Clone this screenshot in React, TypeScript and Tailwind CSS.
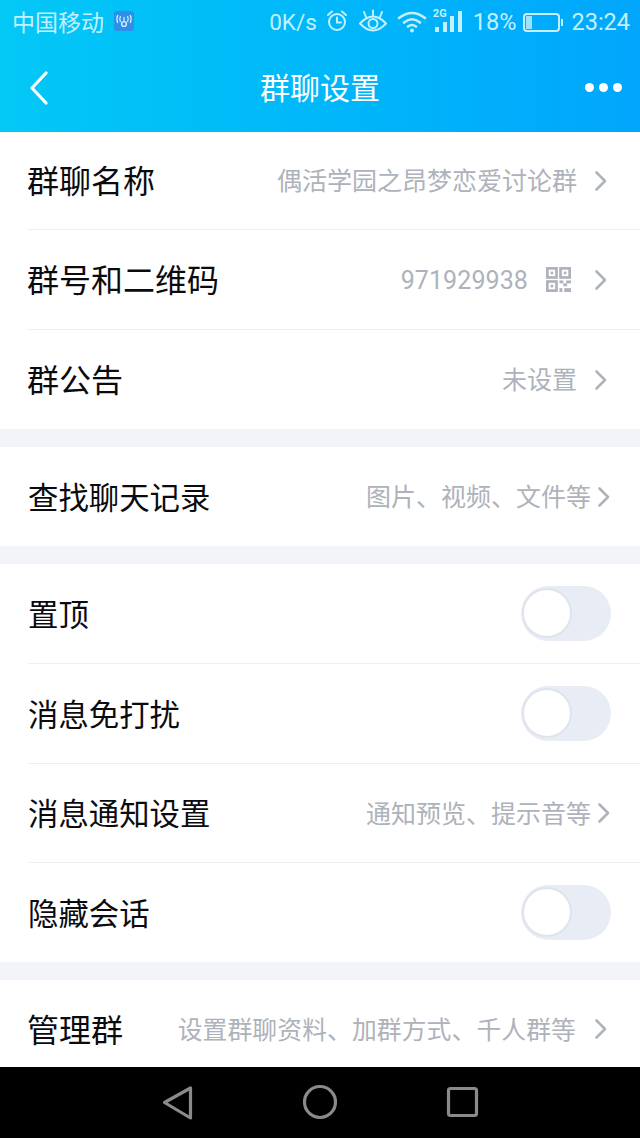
const FONT = "font-['Noto_Sans_CJK_SC','Noto_Sans',sans-serif]";

function Chevron({ className = "" }: { className?: string }) {
  return (
    <svg width="14" height="22" viewBox="0 0 14 22" className={className}>
      <path d="M2.5 2.5 L11 11 L2.5 19.5" fill="none" stroke="#aeb2ba" strokeWidth="2.6" strokeLinecap="round" strokeLinejoin="round" />
    </svg>
  );
}

function Toggle() {
  return (
    <div className="w-[90px] h-[55px] rounded-full bg-[#e8ecf4] relative">
      <div className="absolute left-[1px] top-[2px] w-[50px] h-[50px] rounded-full bg-white border-2 border-[#dfe3ec]" />
    </div>
  );
}

function QrIcon() {
  return (
    <svg width="25" height="25" viewBox="0 0 26 26">
      <g fill="none" stroke="#aeb2ba" strokeWidth="2.8">
        <rect x="1.4" y="1.4" width="9.5" height="9.5" />
        <rect x="15.1" y="1.4" width="9.5" height="9.5" />
        <rect x="1.4" y="15.1" width="9.5" height="9.5" />
      </g>
      <g fill="#aeb2ba">
        <rect x="4.8" y="4.8" width="2.7" height="2.7" />
        <rect x="18.5" y="4.8" width="2.7" height="2.7" />
        <rect x="4.8" y="18.5" width="2.7" height="2.7" />
        <rect x="14" y="14" width="4" height="3" />
        <rect x="21" y="14" width="5" height="3" />
        <rect x="18" y="17" width="4" height="3" />
        <rect x="14" y="22" width="3" height="4" />
        <rect x="19" y="22" width="7" height="4" />
      </g>
    </svg>
  );
}

function Row({ title, value, h, big, border = true, inset = false, qr = false, toggle = false, tight = false, clipped = false }: {
  title: string; value?: string; h: string; big?: boolean; border?: boolean; inset?: boolean; qr?: boolean; toggle?: boolean; tight?: boolean; clipped?: boolean;
}) {
  return (
    <div className={`${h} bg-white ${inset ? "pl-[28px]" : "pl-[27px]"} ${clipped ? "pt-[12px]" : ""}`}>
      <div className={`h-full flex items-center ${border ? "border-b border-[#eeeff3]" : ""} ${toggle || tight ? "pr-[29px]" : "pr-[32px]"}`}>
        <span className={`${big ? "text-[32px] mb-[4px]" : "text-[30.4px] mb-[1px]"} text-[#0b0b0f] leading-none whitespace-nowrap`}>{title}</span>
        <div className="ml-auto flex items-center">
          {value && <span className={`leading-none text-[#aeb2ba] whitespace-nowrap ${clipped ? "text-[24.8px] tracking-[0.1px]" : "text-[25px]"} ${qr ? "font-['Roboto',sans-serif] tracking-[0.1px] mt-[1px]" : "mb-[2px]"}`}>{value}</span>}
          {qr && <span className="ml-[18px] flex"><QrIcon /></span>}
          {toggle ? <Toggle /> : <Chevron className={qr ? "ml-[23px]" : tight ? "ml-[6px]" : clipped ? "ml-[18px]" : "ml-[17px]"} />}
        </div>
      </div>
    </div>
  );
}

function StatusBar() {
  return (
    <div className="h-[44px] flex items-center pl-[12px] pr-[10px] text-[#c4f0fd] font-['Roboto','Noto_Sans_CJK_SC',sans-serif]">
      <span className={`text-[23px] leading-none mb-[2px] ${FONT}`}>中国移动</span>
      <svg width="20" height="20" viewBox="0 0 20 20" className="ml-[10px] mb-[2px]">
        <rect width="20" height="20" rx="3" fill="#2f8fe8" />
        <circle cx="10" cy="13" r="2.4" fill="none" stroke="#d8f0ff" strokeWidth="1.4" />
        <path d="M10 10.5 V6 M6.5 5 Q5 8 6.5 11 M13.5 5 Q15 8 13.5 11 M3.8 4 Q2 8 3.8 12 M16.2 4 Q18 8 16.2 12" stroke="#d8f0ff" strokeWidth="1.2" fill="none" />
      </svg>
      <span className="ml-auto text-[22.5px] leading-none mt-[1px]">0K/s</span>
      <svg width="24" height="24" viewBox="0 0 24 24" className="ml-[8px] mb-[3px]" fill="none" stroke="#c4f0fd" strokeWidth="2" strokeLinecap="round">
        <circle cx="12" cy="13" r="8" />
        <path d="M12 8.5 V13.5 H16 M3 6 L7 2.5 M21 6 L17 2.5" />
      </svg>
      <svg width="28" height="24" viewBox="0 0 28 24" className="ml-[10px] mb-[3px]" fill="none" stroke="#c4f0fd" strokeWidth="2" strokeLinecap="round">
        <path d="M1 14.5 Q14 0.5 27 14.5 Q14 28.5 1 14.5 Z" />
        <circle cx="14" cy="14.5" r="4.5" />
        <path d="M7 8 L5 3 M14 6.5 V1.5 M21 8 L23 3" />
      </svg>
      <svg width="30" height="24" viewBox="0 0 30 24" className="ml-[10px]" fill="none" stroke="#c4f0fd" strokeWidth="2.6" strokeLinecap="round">
        <path d="M2 8 Q15 -2 28 8 M7 12.5 Q15 6 23 12.5 M11 16.5 Q15 13.5 19 16.5" />
        <circle cx="15" cy="20.5" r="2" fill="#c4f0fd" stroke="none" />
      </svg>
      <div className="ml-[6px] w-[29px] h-[26px] mb-[4px] relative">
        <span className="absolute left-0 top-[1px] text-[11px] leading-none font-bold">2G</span>
        <div className="absolute left-0 bottom-[1px] right-0 flex items-end gap-[3.5px] justify-end">
          <div className="w-[4px] h-[5px] bg-[#c4f0fd]" />
          <div className="w-[4px] h-[10px] bg-[#c4f0fd]" />
          <div className="w-[4px] h-[16px] bg-[#c4f0fd]" />
          <div className="w-[4px] h-[21px] bg-[#c4f0fd]" />
        </div>
      </div>
      <span className="ml-[11px] text-[23.5px] leading-none mt-[1px]">18%</span>
      <div className="ml-[7px] w-[37px] h-[19px] border-2 border-[#c4f0fd] rounded-[4px] p-[1px] relative mt-[1px]">
        <div className="w-[6px] h-full bg-[#c4f0fd]/80" />
        <div className="absolute -right-[5px] top-[4px] w-[2px] h-[7px] bg-[#c4f0fd]" />
      </div>
      <span className="ml-[11px] text-[23.5px] leading-none mt-[1px]">23:24</span>
    </div>
  );
}

function Gap() {
  return <div className="h-[18px] bg-[#f3f4f9]" />;
}

export default function App() {
  return (
    <div className={`w-[640px] h-[1138px] flex flex-col overflow-hidden bg-white ${FONT}`}>
      <div className="h-[132px] shrink-0 bg-gradient-to-r from-[#04c8f6] to-[#02a6fc]">
        <StatusBar />
        <div className="h-[88px] grid grid-cols-[1fr_auto_1fr] items-center pl-[29px] pr-[18px]">
          <svg width="20" height="34" viewBox="0 0 20 34">
            <path d="M17 2 L3 17 L17 32" fill="none" stroke="#fff" strokeWidth="3.2" strokeLinecap="round" strokeLinejoin="round" />
          </svg>
          <span className="text-center text-[30px] leading-none text-white mb-[4px] mr-[11px]">群聊设置</span>
          <div className="flex gap-[5px] justify-end mb-[2px]">
            <div className="w-[9px] h-[9px] rounded-full bg-white" />
            <div className="w-[9px] h-[9px] rounded-full bg-white" />
            <div className="w-[9px] h-[9px] rounded-full bg-white" />
          </div>
        </div>
      </div>
      <Row h="h-[98px]" big title="群聊名称" value="偶活学园之昂梦恋爱讨论群" />
      <Row h="h-[100px]" big title="群号和二维码" value="971929938" qr />
      <Row h="h-[99px]" big title="群公告" value="未设置" border={false} />
      <Gap />
      <Row h="h-[99px]" inset tight title="查找聊天记录" value="图片、视频、文件等" border={false} />
      <Gap />
      <Row h="h-[100px]" inset toggle title="置顶" />
      <Row h="h-[100px]" inset toggle title="消息免打扰" />
      <Row h="h-[99px]" inset tight title="消息通知设置" value="通知预览、提示音等" />
      <Row h="h-[99px]" inset toggle title="隐藏会话" border={false} />
      <Gap />
      <Row h="h-[87px]" big clipped title="管理群" value="设置群聊资料、加群方式、千人群等" border={false} />
      <div className="flex-1 bg-black flex items-center">
        <svg width="400" height="71" viewBox="0 0 400 71" className="mx-auto">
          <g fill="none" stroke="#8a8a8a" strokeWidth="3.2" strokeLinejoin="round">
            <path d="M44.5 35.5 L70.5 21 V51 Z" />
            <circle cx="200" cy="35" r="15.5" />
            <rect x="328.5" y="21.5" width="28" height="27" rx="2" />
          </g>
        </svg>
      </div>
    </div>
  );
}
